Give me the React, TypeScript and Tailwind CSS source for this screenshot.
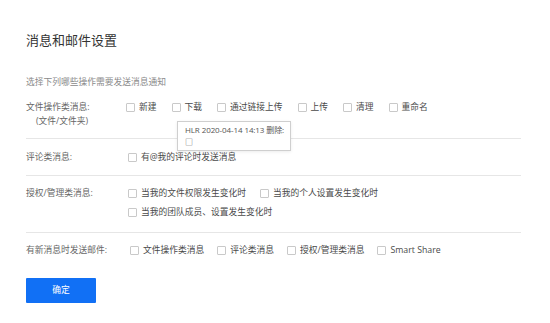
import React from 'react';

const font = 'font-["Open_Sans","Noto_Sans_CJK_SC",sans-serif]';

const Box = () => (
  <span className="inline-block h-[9px] w-[9px] shrink-0 rounded-[1px] border border-[#c9c9c9] bg-white" />
);

function Option({ label }: { label: string }) {
  return (
    <label className="flex h-[14px] items-center gap-[4px] text-[#4a4a4a]">
      <Box />
      <span>{label}</span>
    </label>
  );
}

function Section({
  label,
  sub,
  options,
  className = '',
  optionsClass = '',
}: {
  label: string;
  sub?: string;
  options: string[];
  className?: string;
  optionsClass?: string;
}) {
  return (
    <div className={`flex border-b border-[#e6e6e6] ${className}`}>
      <div className="w-[101px] shrink-0 text-[#666]">
        <div className="h-[14px] leading-[14px]">{label}</div>
        {sub && <div className="h-[14px] pl-[10px] leading-[14px]">{sub}</div>}
      </div>
      <div className={`flex flex-1 flex-wrap gap-x-[14px] gap-y-[5px] leading-[14px] ${optionsClass}`}>
        {options.map((o) => (
          <Option key={o} label={o} />
        ))}
      </div>
    </div>
  );
}

export default function App() {
  return (
    <div className={`relative h-[323px] w-[550px] bg-white text-[8.75px] ${font}`}>
      <div className="w-[521px] pl-[26px] pt-[31px]">
        <h1 className="h-[18px] text-[13px] leading-[18px] text-[#333]">消息和邮件设置</h1>
        <p className="mt-[26px] h-[14px] leading-[14px] text-[#8a8a8a]">选择下列哪些操作需要发送消息通知</p>

        <Section
          label="文件操作类消息:"
          sub="(文件/文件夹)"
          options={['新建', '下载', '通过链接上传', '上传', '清理', '重命名']}
          className="pb-[10px] pt-[11px]"
          optionsClass="-ml-[1px] gap-x-[15px]"
        />
        <Section
          label="评论类消息:"
          options={['有@我的评论时发送消息']}
          className="pb-[11px] pt-[11px]"
          optionsClass="ml-[1px]"
        />
        <Section
          label="授权/管理类消息:"
          options={['当我的文件权限发生变化时', '当我的个人设置发生变化时', '当我的团队成员、设置发生变化时']}
          className="pb-[13px] pt-[10px]"
          optionsClass="ml-[1px] gap-x-[12px]"
        />
        <div className="flex pt-[10px]">
          <div className="w-[101px] shrink-0 leading-[14px] text-[#666]">有新消息时发送邮件:</div>
          <div className="ml-[3px] flex gap-x-[13px] leading-[14px]">
            {['文件操作类消息', '评论类消息', '授权/管理类消息', 'Smart Share'].map((o) => (
              <Option key={o} label={o} />
            ))}
          </div>
        </div>

        <button className="mt-[21px] h-[25px] w-[70px] rounded-[1px] bg-[#1170f5] text-[8.75px] text-white">
          确定
        </button>
      </div>

      <div className="absolute left-[177px] top-[121px] h-[30px] w-[114px] whitespace-nowrap border border-[#cfcfcf] bg-white px-[7px] pt-[2px] text-[8px] tracking-[-0.1px] text-[#555] shadow-[0_1px_3px_rgba(0,0,0,0.08)]">
        <div className="leading-[12px]">HLR 2020-04-14 14:13 删除:</div>
        <div className="leading-[12px]">□</div>
      </div>
    </div>
  );
}
